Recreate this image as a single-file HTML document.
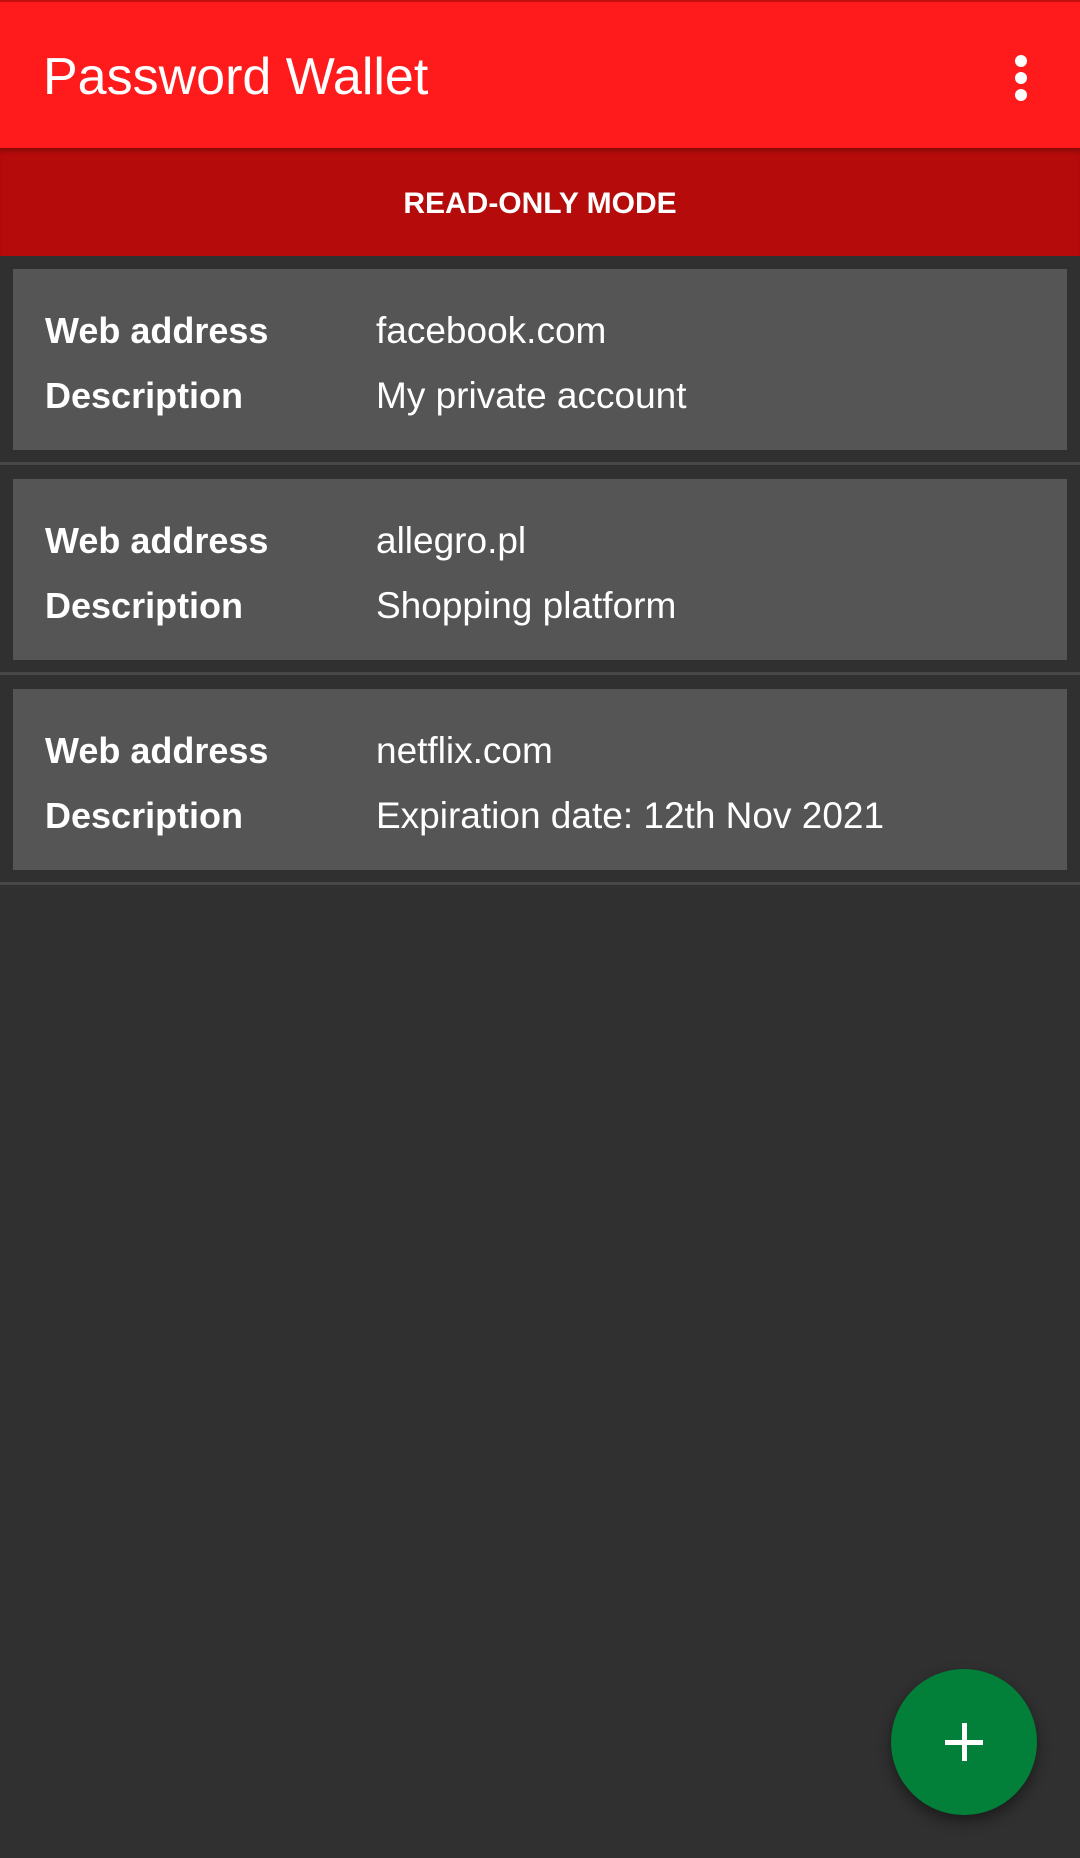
<!DOCTYPE html>
<html><head><meta charset="utf-8"><style>
*{margin:0;padding:0;box-sizing:border-box}
body{width:1080px;height:1858px;background:#303030;font-family:"Liberation Sans",sans-serif;position:relative;overflow:hidden;color:#fff}
.tb{position:absolute;left:0;top:0;width:1080px;height:148px;background:#ff1a1c;border-top:2px solid #c01010}
.title{position:absolute;left:43px;top:45px;font-size:52px;line-height:60px;color:#fff}
.dots{position:absolute;left:1015px;top:53px}
.dots i{display:block;width:12px;height:12px;border-radius:50%;background:#fff;margin-bottom:5px}
.ro{position:absolute;left:0;top:148px;width:1080px;height:108px;background:#b50b0b;text-align:center;font-size:30px;line-height:112px;font-weight:bold;box-shadow:inset 0 6px 6px -4px rgba(0,0,0,.35)}
.card{position:absolute;left:13px;width:1054px;height:181px;background:#555}
.sep{position:absolute;left:0;width:1080px;height:3px;background:#474747}
.r{position:absolute;font-size:36px;line-height:40px;white-space:nowrap}
.l{left:32px;font-weight:bold}
.v{left:363px;font-size:37px}
.fab{position:absolute;left:891px;top:1669px;width:146px;height:146px;border-radius:50%;background:#027f39;box-shadow:0 6px 14px rgba(0,0,0,.45)}
.fab:before{content:"";position:absolute;left:54px;top:71px;width:38px;height:5px;background:#fff}
.fab:after{content:"";position:absolute;left:71px;top:54px;width:5px;height:38px;background:#fff}
</style></head><body>
<div class="tb"><div class="title">Password Wallet</div><div class="dots"><i></i><i></i><i></i></div></div>
<div class="ro">READ-ONLY MODE</div>

<div class="card" style="top:269px"><div class="r l" style="top:42px">Web address</div><div class="r v" style="top:42px">facebook.com</div><div class="r l" style="top:107px">Description</div><div class="r v" style="top:107px">My private account</div></div>
<div class="sep" style="top:462px"></div>
<div class="card" style="top:479px"><div class="r l" style="top:42px">Web address</div><div class="r v" style="top:42px">allegro.pl</div><div class="r l" style="top:107px">Description</div><div class="r v" style="top:107px">Shopping platform</div></div>
<div class="sep" style="top:672px"></div>
<div class="card" style="top:689px"><div class="r l" style="top:42px">Web address</div><div class="r v" style="top:42px">netflix.com</div><div class="r l" style="top:107px">Description</div><div class="r v" style="top:107px">Expiration date: 12th Nov 2021</div></div>
<div class="sep" style="top:882px"></div>

<div class="fab"></div>
</body></html>
